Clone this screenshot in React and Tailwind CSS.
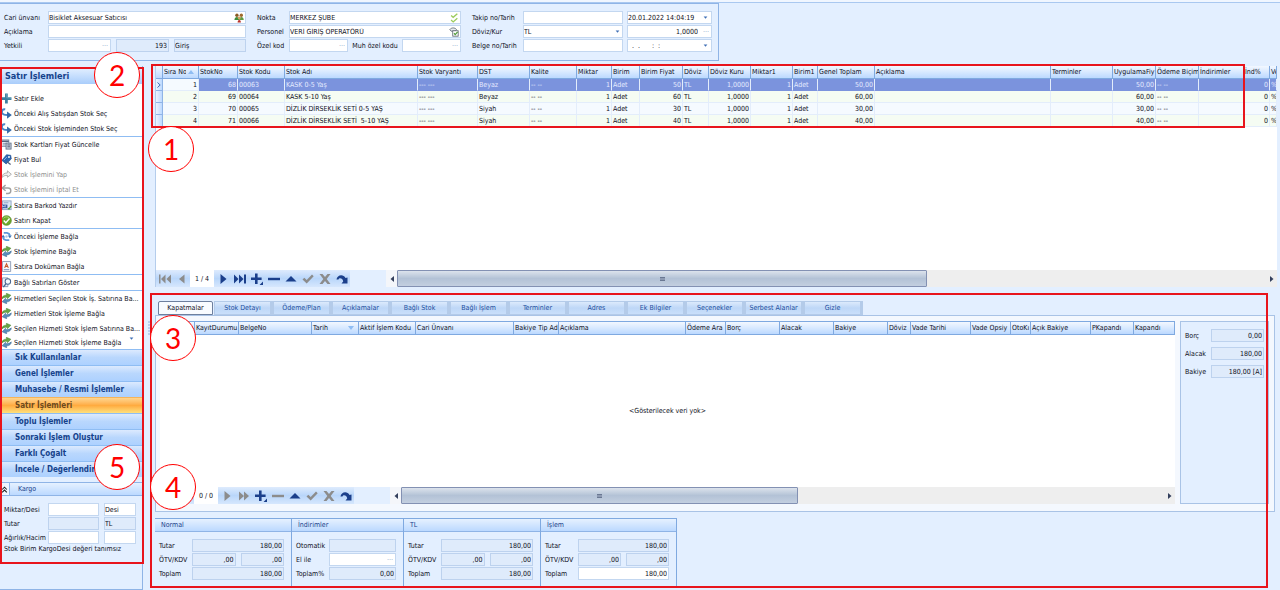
import React, { useState } from "react";
import clsx from "clsx";

const DARK = "#1b3f8b";
const GREY = "#8c8c8c";

/* ---------- icons ---------- */

function Svg({ children, size = 11, className }) {
    return (
        <svg viewBox="0 0 12 12" width={size} height={size} fill="none" className={clsx("shrink-0", className)} aria-hidden="true">
            {children}
        </svg>
    );
}

const PlusIcon = () => (
    <Svg>
        <path d="M4.4 0.5h3v4h4v3h-4v4h-3v-4h-4v-3h4z" fill="#3c7f9f" />
        <path d="M5.3 1.2h1v4.1h4.4v1" stroke="#86bcd2" strokeWidth="0.6" />
    </Svg>
);

const CurveIcon = () => (
    <Svg>
        <path d="M4.6 1.4C1.6 1 0.6 3.2 1.2 5.2 1.9 7.3 4 7.8 8 7.6" stroke="#4a86c6" strokeWidth="2.2" />
        <path d="M6.6 3.8l5.2 3.8-5.2 4z" fill="#3468a8" />
    </Svg>
);

const PriceListIcon = () => (
    <Svg>
        <rect x="0.5" y="1" width="8" height="7" fill="#dfe6ef" stroke="#7f8da3" />
        <path d="M0.5 2.5h8" stroke="#55647e" strokeWidth="1.5" />
        <path d="M2 5h4M2 6.5h3" stroke="#7f8da3" strokeWidth="0.8" />
        <rect x="5.5" y="4.5" width="5.5" height="6.5" fill="#c5ccd8" stroke="#68768d" />
        <path d="M7 6.5h2.8M7 8.5h2.8" stroke="#4c5a72" />
    </Svg>
);

const TagIcon = () => (
    <Svg>
        <path d="M6 0.8l4.6 0.6 0.6 4L5.6 10.8 1 7z" fill="#2f66b0" stroke="#1e4a8c" strokeWidth="0.7" />
        <circle cx="8.7" cy="3.3" r="1" fill="#fff" />
        <path d="M3.2 6.6l3.2-3.2" stroke="#8fb6e6" />
        <path d="M6.5 8.5l4 3" stroke="#53617a" strokeWidth="1.4" />
    </Svg>
);

const RedoGreyIcon = () => (
    <Svg>
        <path d="M0.8 9.5C1 6 3.5 4.3 7 4.3V2l4.3 3.8L7 9V7C4.5 6.8 2.5 7.5 0.8 9.5z" fill="#f1f1f1" stroke="#a3a3a3" strokeWidth="0.9" />
    </Svg>
);

const UndoGreyIcon = () => (
    <Svg>
        <path d="M5 1.2L1.2 4.3 5 7.4M1.5 4.3h6.2c4 0 4 6 0 6H5.5" stroke="#a0a0a0" strokeWidth="1.5" />
    </Svg>
);

const BarcodeIcon = () => (
    <Svg>
        <rect x="1.5" y="1" width="9.5" height="9.5" fill="#dce8f7" stroke="#8ba3c4" />
        <path d="M3 3h5" stroke="#8ba3c4" />
        <path d="M0.5 5h6.5v4H0.5z" fill="#3d62a8" />
        <path d="M1.5 8V6l1.5 1.5L4.5 6v2" stroke="#fff" strokeWidth="0.7" />
        <path d="M7.5 9l1.2 1L11 6.5" stroke="#5b9c38" strokeWidth="1.4" />
    </Svg>
);

const OkIcon = () => (
    <Svg>
        <circle cx="6" cy="6" r="5.3" fill="#6ea82c" stroke="#4c8020" strokeWidth="0.7" />
        <path d="M2.5 3.8C4 1.5 8 1.5 9.5 3.8" stroke="#b7dc7f" />
        <path d="M3 6l2.3 2.5L9.3 3.8" stroke="#fff" strokeWidth="1.5" />
    </Svg>
);

const LinkPrevIcon = () => (
    <Svg>
        <path d="M3 2h3.5a4 4 0 0 1 3.3 3" stroke="#5d97d6" strokeWidth="2" />
        <path d="M7.4 4.8h4.4L9.7 7.8z" fill="#3f78b8" />
        <path d="M9 10H5.5a4 4 0 0 1-3.3-3" stroke="#5d97d6" strokeWidth="2" />
        <path d="M0.2 7.2h4.4L2.3 4.2z" fill="#3f78b8" />
        <circle cx="6" cy="6" r="1.3" fill="#a9c9ec" />
    </Svg>
);

const SyncIcon = () => (
    <Svg>
        <g transform="rotate(-12 6 6)">
            <path d="M0.8 5.6C1 3 4 1.8 7 2.2V0.3l4.4 3.2L7 6.5V4.9C4.5 4.3 2.5 4.3 0.8 5.6z" fill="#6aa544" stroke="#3f7a25" strokeWidth="0.5" />
            <path d="M11.2 6.4C11 9 8 10.2 5 9.8v1.9L0.6 8.5 5 5.5v1.6C7.500 7.700 9.500 7.700 11.200 6.400z" fill="#5a8fbc" stroke="#2c5c88" strokeWidth="0.5" />
        </g>
    </Svg>
);

const DocIcon = () => (
    <Svg>
        <path d="M1.5 0.5h9v11h-9z" fill="#f8f8fb" stroke="#8d9bb5" />
        <path d="M4 7.5l2-4.5 2 4.5M4.7 6h2.6" stroke="#c4572a" strokeWidth="1.2" />
        <path d="M3 9.5h6" stroke="#6b86b5" />
    </Svg>
);

const ShowIcon = () => (
    <Svg>
        <path d="M1.5 1h6v9.5h-6z" fill="#e9f0fa" stroke="#8296b6" />
        <circle cx="7.5" cy="5" r="3" fill="#f5fbff" stroke="#4c678f" strokeWidth="1.1" />
        <path d="M5.5 7.2L2.5 11" stroke="#4c678f" strokeWidth="1.5" />
    </Svg>
);

const PeopleIcon = () => (
    <Svg size={10}>
        <circle cx="3.5" cy="2.7" r="2" fill="#8a5a24" />
        <circle cx="8.8" cy="2.7" r="2" fill="#a06a2c" />
        <path d="M0.5 8.500c0-5 6-5 6 0z" fill="#3f8c3a" />
        <path d="M6 8.500c0-5 5.700-5 5.700 0z" fill="#5f9c44" />
        <circle cx="6.2" cy="6" r="1.7" fill="#d2a061" />
        <path d="M4.3 11.5c0-4 4-4 4 0z" fill="#b8322a" />
    </Svg>
);

const DoubleCheckIcon = () => (
    <Svg size={10}>
        <path d="M2.5 3l2.5 2.2L10 0.8M2.5 8.5l2.5 2.2L10 6.3" stroke="#9ccc5e" strokeWidth="1.6" />
    </Svg>
);

const StaffIcon = () => (
    <Svg size={10}>
        <path d="M1 3c2-2.5 6-2.5 8 0l-1.5 2h-5z" fill="#e8ecf0" stroke="#5c6670" />
        <rect x="4.5" y="4.5" width="6.5" height="6.5" fill="#fff" stroke="#5c6670" />
        <path d="M6 7.5l1.5 1.7 2.8-3.4" stroke="#4e9a37" strokeWidth="1.4" />
    </Svg>
);

const DownArrow = () => (
    <svg viewBox="0 0 6 4" width="5" height="3" className="shrink-0" aria-hidden="true">
        <path d="M0.5 0.5h5L3 3.5z" fill="#3f6fb5" />
    </svg>
);

/* ---------- form pieces ---------- */

function Field({ label, value = "", right, grey, suffix, className }) {
    return (
        <span
            className={clsx(
                "flex h-[13px] min-w-0 items-center border pr-px",
                grey ? "border-[#bdd2ee] bg-[#dfebfb]" : "border-[#c3d7f0] bg-white",
                className
            )}
        >
            <input
                aria-label={label}
                defaultValue={value}
                readOnly={grey}
                className={clsx("h-full w-full min-w-0 flex-1 bg-transparent outline-none", right && "text-right")}
            />
            {suffix && <span className="flex shrink-0 items-center pl-px text-[#7d9cc8]">{suffix}</span>}
        </span>
    );
}

const Dots = () => <span className="pr-px pl-1 text-[#7f9fce]">···</span>;
const Drop = () => <span className="pr-[2px] pl-px"><DownArrow /></span>;

function TopForm() {
    return (
        <form className="flex w-fit gap-[11px] border border-l-0 border-[#8fb4e6] bg-[#e3efff] pt-[7px] pr-[6px] pb-2 pl-1">
            <div className="grid w-[242px] grid-cols-[44px_1fr] items-center gap-y-px">
                <span>Cari ünvanı</span>
                <Field label="Cari ünvanı" value="Bisiklet Aksesuar Satıcısı" suffix={<PeopleIcon />} />
                <span>Açıklama</span>
                <Field label="Açıklama" />
                <span>Yetkili</span>
                <div className="flex gap-[5px]">
                    <Field label="Yetkili" className="w-[63px]" suffix={<Dots />} />
                    <Field label="Yetkili no" value="193" right grey className="w-[53px]" />
                    <Field label="Durum" value="Giriş" grey className="flex-1" />
                </div>
            </div>
            <div className="grid w-[204px] grid-cols-[32px_1fr] items-center gap-y-px">
                <span>Nokta</span>
                <Field label="Nokta" value="MERKEZ ŞUBE" suffix={<DoubleCheckIcon />} />
                <span>Personel</span>
                <Field label="Personel" value="VERİ GİRİŞ OPERATÖRÜ" suffix={<StaffIcon />} />
                <span className="whitespace-nowrap">Özel kod</span>
                <div className="flex items-center justify-between">
                    <Field label="Özel kod" className="w-[59px]" suffix={<Dots />} />
                    <span>Muh özel kodu</span>
                    <Field label="Muh özel kodu" className="w-[59px]" suffix={<Dots />} />
                </div>
            </div>
            <div className="grid w-[240px] grid-cols-[51px_100px_1fr] items-center gap-y-px">
                <span>Takip no/Tarih</span>
                <Field label="Takip no" />
                <Field label="Takip tarihi" value="20.01.2022 14:04:19" className="ml-1" suffix={<Drop />} />
                <span>Döviz/Kur</span>
                <span className="flex h-[13px] items-center border border-[#c3d7f0] bg-white">
                    <select aria-label="Döviz" className="h-full w-full appearance-none bg-transparent outline-none">
                        <option>TL</option>
                    </select>
                    <Drop />
                </span>
                <Field label="Kur" value="1,0000" right className="ml-1" suffix={<Dots />} />
                <span>Belge no/Tarih</span>
                <Field label="Belge no" />
                <Field label="Belge tarihi" value="  .  .      :  :" className="ml-1 whitespace-pre" suffix={<Drop />} />
            </div>
        </form>
    );
}

/* ---------- sidebar ---------- */

const actionGroups = [
    [
        { icon: PlusIcon, text: "Satır Ekle" },
        { icon: CurveIcon, text: "Önceki Alış Satışdan Stok Seç" },
        { icon: CurveIcon, text: "Önceki Stok İşleminden Stok Seç" },
    ],
    [
        { icon: PriceListIcon, text: "Stok Kartları Fiyat Güncelle" },
        { icon: TagIcon, text: "Fiyat Bul" },
        { icon: RedoGreyIcon, text: "Stok İşlemini Yap", disabled: true },
        { icon: UndoGreyIcon, text: "Stok İşlemini İptal Et", disabled: true },
    ],
    [
        { icon: BarcodeIcon, text: "Satıra Barkod Yazdır" },
        { icon: OkIcon, text: "Satırı Kapat" },
    ],
    [
        { icon: LinkPrevIcon, text: "Önceki İşleme Bağla" },
        { icon: SyncIcon, text: "Stok İşlemine Bağla" },
        { icon: DocIcon, text: "Satıra Doküman Bağla" },
    ],
    [{ icon: ShowIcon, text: "Bağlı Satırları Göster" }],
    [
        { icon: SyncIcon, text: "Hizmetleri Seçilen Stok İş. Satırına Ba..." },
        { icon: SyncIcon, text: "Hizmetleri Stok İşleme Bağla" },
        { icon: SyncIcon, text: "Seçilen Hizmeti Stok İşlem Satırına Ba..." },
        { icon: SyncIcon, text: "Seçilen Hizmeti Stok İşleme Bağla", more: true },
    ],
];

const menus = [
    "Sık Kullanılanlar",
    "Genel İşlemler",
    "Muhasebe / Resmi İşlemler",
    "Satır İşlemleri",
    "Toplu İşlemler",
    "Sonraki İşlem Oluştur",
    "Farklı Çoğalt",
    "İncele / Değerlendir",
];

function Sidebar() {
    const [active, setActive] = useState("Satır İşlemleri");

    return (
        <aside className="relative flex w-[143px] shrink-0 flex-col border-r border-b border-[#8fb4e6]">
            <h2 className="mt-px flex h-[17px] items-center bg-linear-to-b from-[#e6f1ff] to-[#a9cdfb] pl-[5px] text-[9px] font-bold text-[#15428b]">
                Satır İşlemleri
            </h2>
            <div className="bg-white pt-[7px]">
                {actionGroups.map((group, i) => (
                    <ul key={i} className={clsx(i > 0 && "border-t border-[#8fbdf3]")}>
                        {group.map((a) => (
                            <li key={a.text}>
                                <button
                                    type="button"
                                    disabled={a.disabled}
                                    className={clsx(
                                        "flex w-full items-center gap-[2px] pl-px whitespace-nowrap disabled:text-[#8d8d8d]",
                                        a.more ? "h-[13px]" : "h-[15px]"
                                    )}
                                >
                                    <a.icon />
                                    {a.text}
                                    {a.more && <span className="mb-2 ml-[6px]"><DownArrow /></span>}
                                </button>
                            </li>
                        ))}
                    </ul>
                ))}
            </div>
            <nav>
                {menus.map((m) => (
                    <button
                        key={m}
                        type="button"
                        onClick={() => setActive(m)}
                        className={clsx(
                            "flex h-4 w-full items-center border-t pl-[15px] text-[8px] font-bold",
                            m === active
                                ? "border-[#f5b45a] bg-linear-to-b from-[#ffd58e] via-[#ffab3f] to-[#fee07c] text-[#6b4a1e]"
                                : "border-[#8fbdf3] bg-linear-to-b from-[#dceafe] via-[#b9d7fd] to-[#add1ff] text-[#15428b]"
                        )}
                    >
                        {m}
                    </button>
                ))}
            </nav>
            <section className="mt-[5px]">
                <h3 className="flex h-[14px] items-center border-y border-[#8fb4e6] bg-linear-to-b from-[#e6f1ff] to-[#bcd9ff] text-[#1b3f8b]">
                    <button type="button" aria-label="Daralt" className="flex h-3 w-[10px] items-center justify-center border-r border-[#8fb4e6] bg-[#eef5ff]">
                        <Svg size={7}>
                            <path d="M2 6l4-4 4 4M2 11l4-4 4 4" stroke="#222" strokeWidth="1.8" />
                        </Svg>
                    </button>
                    <span className="ml-2">Kargo</span>
                </h3>
                <div className="mt-[7px] grid grid-cols-[44px_51px_32px] items-center gap-y-px pl-1">
                    <span>Miktar/Desi</span>
                    <Field label="Miktar/Desi" />
                    <Field label="Desi birimi" value="Desi" className="-mr-[5px] ml-[5px]" />
                    <span>Tutar</span>
                    <Field label="Tutar" grey />
                    <Field label="Tutar dövizi" value="TL" grey className="-mr-[5px] ml-[5px]" />
                    <span>Ağırlık/Hacim</span>
                    <Field label="Ağırlık" />
                    <Field label="Hacim" className="-mr-[5px] ml-[5px]" />
                </div>
                <p className="pl-1">Stok Birim KargoDesi değeri tanımsız</p>
            </section>
            <Frame className="top-px -right-[2px] bottom-[25px] left-0" />
            <Marker n="2" className="-top-[14px] left-[94px]" />
            <Marker n="5" className="bottom-[99px] left-[94px]" />
        </aside>
    );
}

/* ---------- red call-outs ---------- */

const Frame = ({ className }) => <div className={clsx("pointer-events-none absolute z-10 border-2 border-[#e8141c]", className)} />;

const Marker = ({ n, className }) => (
    <div
        className={clsx(
            "pointer-events-none absolute z-20 flex size-[46px] items-center justify-center rounded-full border border-[#ff0000] bg-white font-['Lato',sans-serif] text-[28px] leading-none text-[#ff0000]",
            className
        )}
    >
        {n}
    </div>
);

/* ---------- grids ---------- */

const head = "h-[13px] overflow-hidden border-r border-b border-[#7fa9e0] bg-linear-to-b from-[#f3f8ff] to-[#bcd9ff] pl-px text-left font-normal whitespace-nowrap";

const SortMark = ({ down }) => (
    <svg viewBox="0 0 6 4" width="6" height="4" className={clsx("mr-1 ml-auto shrink-0", down && "rotate-180")} aria-hidden="true">
        <path d="M0 4h6L3 0z" fill="#8fbdf3" />
    </svg>
);

// w: 0 lets the column take what is left
const stockCols = [
    { name: "Sıra No", w: 36, right: true, sort: "up" },
    { name: "StokNo", w: 39, right: true },
    { name: "Stok Kodu", w: 47 },
    { name: "Stok Adı", w: 133 },
    { name: "Stok Varyantı", w: 60 },
    { name: "DST", w: 52 },
    { name: "Kalite", w: 47 },
    { name: "Miktar", w: 35, right: true },
    { name: "Birim", w: 28 },
    { name: "Birim Fiyat", w: 43, right: true },
    { name: "Döviz", w: 26 },
    { name: "Döviz Kuru", w: 42, right: true },
    { name: "Miktar1", w: 42, right: true },
    { name: "Birim1", w: 25 },
    { name: "Genel Toplam", w: 57, right: true },
    { name: "Açıklama", w: 0 },
    { name: "Terminler", w: 62 },
    { name: "UygulamaFiy", w: 43, right: true },
    { name: "Ödeme Biçim", w: 43 },
    { name: "İndirimler", w: 45 },
    { name: "İnd%", w: 26, right: true },
    { name: "Ve", w: 7 },
];

const stockRow = (no, id, code, name, dst, price) => [
    no, id, code, name, "--- ---", dst, "-- --", "1", "Adet", price, "TL", "1,0000", "1", "Adet", price + ",00", "", "", price + ",00", "-- --", "", "0", "%",
];

const stockRows = [
    stockRow("1", "68", "00063", "KASK 0-5 Yaş", "Beyaz", "50"),
    stockRow("2", "69", "00064", "KASK 5-10 Yaş", "Beyaz", "60"),
    stockRow("3", "70", "00065", "DİZLİK DİRSEKLİK SETİ 0-5 YAŞ", "Siyah", "30"),
    stockRow("4", "71", "00066", "DİZLİK DİRSEKLİK SETİ  5-10 YAŞ", "Siyah", "40"),
];

function StockTable() {
    return (
        <table className="w-full table-fixed border-separate border-spacing-0">
            <colgroup>
                <col style={{ width: 7 }} />
                {stockCols.map((c) => <col key={c.name} style={c.w ? { width: c.w } : undefined} />)}
            </colgroup>
            <thead>
                <tr>
                    <th className={head} />
                    {stockCols.map((c) => (
                        <th key={c.name} className={head}>
                            {c.sort ? (
                                <span className="flex items-center">
                                    <span className="w-[22px] overflow-hidden">{c.name}</span>
                                    <SortMark />
                                </span>
                            ) : c.name}
                        </th>
                    ))}
                </tr>
            </thead>
            <tbody>
                {stockRows.map((row, r) => (
                    <tr key={row[0]} className={r % 2 ? "bg-[#f5fcf3]" : "bg-[#f5faff]"}>
                        <td className="h-3 border-r border-b border-[#8fb4e6] bg-linear-to-r from-[#eef5ff] to-[#bcd9ff]">
                            {r === 0 && (
                                <svg viewBox="0 0 4 6" width="4" height="6" fill="none" className="mx-auto" aria-hidden="true">
                                    <path d="M0.5 0.5L3.2 3 0.5 5.5" stroke="#3f6fb5" />
                                </svg>
                            )}
                        </td>
                        {row.map((v, i) => (
                            <td
                                key={i}
                                className={clsx(
                                    "h-3 overflow-hidden border-r border-b border-[#e3edfb] px-px whitespace-pre",
                                    stockCols[i].right && "text-right",
                                    r === 0 && i > 0 && "border-b-[#7b93dd] bg-[#7b93dd] text-[#e4eaff]"
                                )}
                            >
                                {v}
                            </td>
                        ))}
                    </tr>
                ))}
            </tbody>
        </table>
    );
}

const closeCols = [
    ["", 7], ["", 28], ["KayıtDurumu", 44], ["BelgeNo", 73], ["Tarih", 47], ["Aktif İşlem Kodu", 57], ["Cari Ünvanı", 98],
    ["Bakiye Tip Ad", 45], ["Açıklama", 0], ["Ödeme Ara", 40], ["Borç", 54], ["Alacak", 54], ["Bakiye", 54], ["Döviz", 23],
    ["Vade Tarihi", 60], ["Vade Opsiy", 40], ["OtoKı", 20], ["Açık Bakiye", 60], ["PKapandı", 43], ["Kapandı", 41],
];

function CloseTable() {
    return (
        <table className="w-full table-fixed border-separate border-spacing-0 border-t border-[#7fa9e0]">
            <colgroup>
                {closeCols.map(([, w], i) => <col key={i} style={w ? { width: w } : undefined} />)}
            </colgroup>
            <thead>
                <tr>
                    {closeCols.map(([name], i) => (
                        <th key={i} className={head}>
                            {name === "Tarih" ? <span className="flex items-center">Tarih<SortMark down /></span> : name}
                        </th>
                    ))}
                </tr>
            </thead>
        </table>
    );
}

/* ---------- record navigator ---------- */

const glyphs = {
    first: "M0 1.5h1.5v9H0zM6.5 1.5v9L2 6zM12 1.5v9L7.5 6z",
    prev: "M8.5 1.5v9L3 6z",
    next: "M3.5 1v10L9.5 6z",
    fast: "M1 1.5v9L6 6zM6 1.5v9L11 6z",
    last: "M0 1.5v9L4.5 6zM5 1.5v9L9.5 6zM10 1.5H12v9H10z",
    add: "M4 0.5h2.6v4h4v2.6h-4v4H4v-4H0V4.500h4zM12 8.500V12H8.500z",
    remove: "M0 4.8h12v2.4H0z",
    edit: "M0.5 8.5h11L6 3z",
    post: "M0.5 6.5L2.3 4.7 4.7 7 10 1.5l1.7 1.7-7 7.3z",
    cancel: "M0.5 1h3L6 4l2.5-3h3L7.7 6l3.8 5h-3L6 8l-2.5 3h-3l3.8-5z",
    refresh: "M0.5 6.5C1 1.5 7.5 0.5 9.5 5L11.5 4.5V10.5H5.5L7.2 8.5C6.8 5 3 4.5 2.5 6.5z",
};

function Navigator({ position, buttons, thumb }) {
    const render = ([name, on]) => (
        <button key={name} type="button" aria-label={name} className="flex h-full w-[17px] items-center justify-center">
            <svg viewBox="0 0 12 12" width="12" height="12" aria-hidden="true">
                <path d={glyphs[name]} fill={on ? DARK : GREY} />
            </svg>
        </button>
    );

    return (
        <div className="flex h-[17px] bg-[#e3efff]">
            <div className="flex bg-linear-to-b from-[#deebfd] via-[#b9d6fa] to-[#d6e7fd]">{buttons.slice(0, 2).map(render)}</div>
            <span className="flex w-6 items-center justify-center bg-white whitespace-nowrap">{position}</span>
            <div className="flex bg-linear-to-b from-[#deebfd] via-[#b9d6fa] to-[#d6e7fd]">{buttons.slice(2).map(render)}</div>
            <div className="w-9" />
            <div className="flex flex-1 items-center bg-[#eeeeee]">
                <button type="button" aria-label="Sola kaydır" className="flex h-full w-[11px] items-center justify-center bg-[#f4f6fa]">
                    <svg viewBox="0 0 4 6" width="4" height="6"><path d="M4 0v6L0.5 3z" fill="#333f5c" /></svg>
                </button>
                <div className="h-full flex-1">
                    <div
                        className="flex h-full items-center justify-center rounded-[1px] border border-[#8391b3] bg-linear-to-b from-[#dce3ec] via-[#b3c2d6] to-[#c3cfe0]"
                        style={{ width: thumb }}
                    >
                        <span className="h-1 w-[5px] border-y border-[#6a7893] bg-[#8d9ab2]" />
                    </div>
                </div>
                <button type="button" aria-label="Sağa kaydır" className="flex h-full w-[11px] items-center justify-center">
                    <svg viewBox="0 0 4 6" width="4" height="6"><path d="M0 0v6L3.5 3z" fill="#333f5c" /></svg>
                </button>
            </div>
        </div>
    );
}

const stockNav = [
    ["first", false], ["prev", false], ["next", true], ["last", true], ["add", true],
    ["remove", true], ["edit", true], ["post", false], ["cancel", false], ["refresh", true],
];

const closeNav = [
    ["first", false], ["prev", false], ["next", false], ["fast", false], ["add", true],
    ["remove", false], ["edit", true], ["post", false], ["cancel", false], ["refresh", true],
];

/* ---------- detail tabs ---------- */

const tabs = [
    "Kapatmalar", "Stok Detayı", "Ödeme/Plan", "Açıklamalar", "Bağlı Stok", "Bağlı İşlem",
    "Terminler", "Adres", "Ek Bilgiler", "Seçenekler", "Serbest Alanlar", "Gizle",
];

function Details() {
    const [tab, setTab] = useState(tabs[0]);

    return (
        <div>
            <div role="tablist" className="flex pl-[3px]">
                {tabs.map((t) => (
                    <button
                        key={t}
                        type="button"
                        role="tab"
                        aria-selected={t === tab}
                        onClick={() => setTab(t)}
                        className={clsx(
                            "flex h-[14px] items-center justify-center border whitespace-nowrap",
                            t === tab
                                ? "mr-px w-[55px] rounded-t-[2px] border-[#6d7f9e] bg-[#f8fbff]"
                                : "w-[59px] border-r-[3px] border-[#b4cbe9] bg-linear-to-b from-[#dceafc] via-[#bed7f7] to-[#c9dffa] text-[#1e4f9e]"
                        )}
                    >
                        {t}
                    </button>
                ))}
            </div>
            <div className="mr-[5px] flex gap-[5px] border border-[#a9c3e6] bg-[#f4f8fe] pt-[5px] pr-[5px] pb-[7px] pl-1">
                <div className="flex min-w-0 flex-1 flex-col bg-white">
                    <CloseTable />
                    <p className="flex min-h-[152px] flex-1 items-center justify-center">&lt;Gösterilecek veri yok&gt;</p>
                    <Navigator position="0 / 0" buttons={closeNav} thumb="52%" />
                </div>
                <div className="flex w-[89px] shrink-0 flex-col gap-[5px] border border-[#a9c3e6] bg-[#e3efff] px-1 pt-[7px]">
                    {[["Borç", "0,00"], ["Alacak", "180,00"], ["Bakiye", "180,00 [A]"]].map(([l, v]) => (
                        <div key={l} className="flex items-center">
                            <span className="w-[26px]">{l}</span>
                            <Field label={l} value={v} right grey className="flex-1" />
                        </div>
                    ))}
                </div>
            </div>
        </div>
    );
}

/* ---------- totals ---------- */

function Totals({ title, className, children }) {
    return (
        <section className={clsx("border border-l-0 border-[#7fa9e0]", className)}>
            <h3 className="flex h-[13px] items-center border-b border-[#8fb4e6] bg-linear-to-b from-[#e6f1ff] to-[#bcd9ff] pl-[6px] text-[#1b3f8b]">
                {title}
            </h3>
            <div className="grid grid-cols-[33px_1fr] items-center gap-y-px pt-[7px] pr-[7px] pb-[6px] pl-1">{children}</div>
        </section>
    );
}

function TaxTotals({ title, className, editable }) {
    return (
        <Totals title={title} className={className}>
            <span>Tutar</span>
            <Field label={title + " tutar"} value="180,00" right grey />
            <span>ÖTV/KDV</span>
            <div className="flex gap-[5px]">
                <Field label={title + " ÖTV"} value=",00" right grey className="flex-1" />
                <Field label={title + " KDV"} value=",00" right grey className="flex-1" />
            </div>
            <span>Toplam</span>
            <Field label={title + " toplam"} value="180,00" right grey={!editable} />
        </Totals>
    );
}

export default function App() {
    return (
        <div className="flex min-h-screen flex-col overflow-hidden bg-[#e3efff] font-['DejaVu_Sans_Condensed','DejaVu_Sans',sans-serif] text-[7px] leading-[10px] text-[#10101c]">
            <div className="h-[3px] border-b border-[#a9c8f0] bg-[#f0f6ff]" />
            <TopForm />
            <div className="mt-[5px] flex flex-1">
                <Sidebar />
                <div className="flex w-3 items-center justify-center" aria-hidden="true">
                    <svg viewBox="0 0 2 14" width="2" height="14">
                        <path d="M0 1h2M0 4h2M0 7h2M0 10h2M0 13h2" stroke="#8fb0de" />
                    </svg>
                </div>
                <main className="flex min-w-0 flex-1 flex-col pb-[3px]">
                    <div className="relative mr-[3px] flex flex-1 flex-col border-l border-[#b5cdec] bg-white">
                        <StockTable />
                        <div className="flex-1" />
                        <Navigator position="1 / 4" buttons={stockNav} thumb="61%" />
                        <Frame className="-top-[2px] right-8 -left-[5px] h-[64px]" />
                        <Marker n="1" className="top-[60px] -left-[8px]" />
                    </div>
                    <div className="relative pt-[14px]">
                        <Details />
                        <div className="mt-[6px] flex">
                            <TaxTotals title="Normal" className="w-[137px] border-l" />
                            <Totals title="İndirimler" className="w-[112px]">
                                <span>Otomatik</span>
                                <Field label="Otomatik" grey />
                                <span>El ile</span>
                                <Field label="El ile" suffix={<Dots />} />
                                <span>Toplam%</span>
                                <Field label="Toplam%" value="0,00" right grey />
                            </Totals>
                            <TaxTotals title="TL" className="w-[137px]" />
                            <TaxTotals title="İşlem" className="w-[136px]" editable />
                        </div>
                        <Frame className="top-[6px] right-3 -bottom-px -left-[5px]" />
                        <Marker n="3" className="top-[28px] -left-[5px]" />
                        <Marker n="4" className="bottom-[77px] -left-[5px]" />
                    </div>
                </main>
            </div>
        </div>
    );
}
